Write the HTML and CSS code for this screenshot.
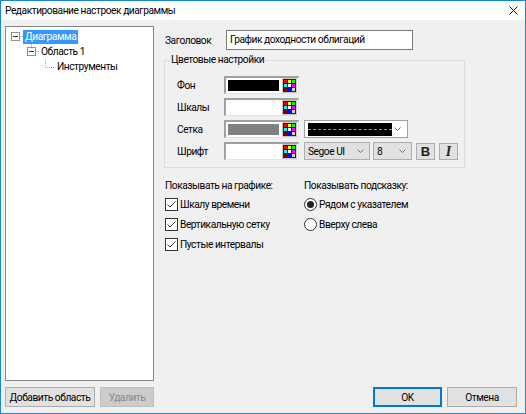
FILE: index.html
```html
<!DOCTYPE html>
<html lang="ru">
<head>
<meta charset="utf-8">
<title>Редактирование настроек диаграммы</title>
<link rel="stylesheet" href="styles.css">
</head>
<body>
<div class="window">
  <div class="titlebar">
    <span class="title">Редактирование настроек диаграммы</span>
    <svg class="close" width="9" height="9" viewBox="0 0 9 9"><path d="M0.5 0.5L8.5 8.5M8.5 0.5L0.5 8.5" stroke="#111" stroke-width="1"/></svg>
  </div>
  <div class="content">
    <div class="left">
      <div class="tree">
        <div class="node lvl0">
          <svg class="twist" width="15" height="15" viewBox="0 0 15 15">
            <rect x="3.5" y="3.5" width="8" height="8" fill="#fff" stroke="#919191"/>
            <path d="M5 7.5H10" stroke="#333"/>
            <path d="M12 7.5H15" stroke="#a0a0a0" stroke-dasharray="1 1"/>
          </svg>
          <span class="label selected">Диаграмма</span>
        </div>
        <div class="node lvl1">
          <svg class="twist" width="15" height="15" viewBox="0 0 15 15">
            <path d="M7.5 0V3" stroke="#a0a0a0" stroke-dasharray="1 1"/>
            <rect x="3.5" y="3.5" width="8" height="8" fill="#fff" stroke="#919191"/>
            <path d="M5 7.5H10" stroke="#333"/>
            <path d="M12 7.5H15" stroke="#a0a0a0" stroke-dasharray="1 1"/>
          </svg>
          <span class="label">Область 1</span>
        </div>
        <div class="node lvl2">
          <svg class="twist" width="15" height="15" viewBox="0 0 15 15">
            <path d="M5.5 0V8.5H14" fill="none" stroke="#a0a0a0" stroke-dasharray="1 1"/>
          </svg>
          <span class="label">Инструменты</span>
        </div>
      </div>
      <div class="left-buttons">
        <button class="btn btn-add">Добавить область</button>
        <button class="btn btn-del" disabled>Удалить</button>
      </div>
    </div>

    <div class="right">
      <div class="caption-row">
        <span class="caption-label">Заголовок</span>
        <div class="textbox">График доходности облигаций</div>
      </div>

      <fieldset class="group">
        <legend>Цветовые настройки</legend>
        <div class="crow">
          <span class="clabel">Фон</span>
          <div class="colorbox">
            <span class="swatch swatch-black"></span>
            <span class="palette"><i class="p1"></i><i class="p2"></i><i class="p3"></i><i class="p4"></i><i class="p5"></i><i class="p6"></i><i class="p7"></i><i class="p8"></i><i class="p9"></i></span>
          </div>
        </div>
        <div class="crow">
          <span class="clabel">Шкалы</span>
          <div class="colorbox">
            <span class="swatch swatch-white"></span>
            <span class="palette"><i class="p1"></i><i class="p2"></i><i class="p3"></i><i class="p4"></i><i class="p5"></i><i class="p6"></i><i class="p7"></i><i class="p8"></i><i class="p9"></i></span>
          </div>
        </div>
        <div class="crow">
          <span class="clabel">Сетка</span>
          <div class="colorbox">
            <span class="swatch swatch-gray"></span>
            <span class="palette"><i class="p1"></i><i class="p2"></i><i class="p3"></i><i class="p4"></i><i class="p5"></i><i class="p6"></i><i class="p7"></i><i class="p8"></i><i class="p9"></i></span>
          </div>
          <div class="combo combo-line">
            <span class="linestyle"><span class="dash"></span></span>
            <svg class="chev" width="7" height="4" viewBox="0 0 7 4"><path d="M0.5 0.5L3.5 3.5L6.5 0.5" fill="none" stroke="#707070"/></svg>
          </div>
        </div>
        <div class="crow">
          <span class="clabel">Шрифт</span>
          <div class="colorbox">
            <span class="swatch swatch-white"></span>
            <span class="palette"><i class="p1"></i><i class="p2"></i><i class="p3"></i><i class="p4"></i><i class="p5"></i><i class="p6"></i><i class="p7"></i><i class="p8"></i><i class="p9"></i></span>
          </div>
          <div class="combo combo-font">
            <span class="combo-text">Segoe UI</span>
            <svg class="chev" width="7" height="4" viewBox="0 0 7 4"><path d="M0.5 0.5L3.5 3.5L6.5 0.5" fill="none" stroke="#707070"/></svg>
          </div>
          <div class="combo combo-size">
            <span class="combo-text">8</span>
            <svg class="chev" width="7" height="4" viewBox="0 0 7 4"><path d="M0.5 0.5L3.5 3.5L6.5 0.5" fill="none" stroke="#707070"/></svg>
          </div>
          <button class="tbtn tbtn-b">B</button>
          <button class="tbtn tbtn-i">I</button>
        </div>
      </fieldset>

      <div class="options">
        <div class="opt-col">
          <div class="opt-head">Показывать на графике:</div>
          <div class="opt">
            <svg class="check" width="13" height="13" viewBox="0 0 13 13"><rect x="0.5" y="0.5" width="12" height="12" fill="#fff" stroke="#333"/><path d="M2.5 6.5L5 9L10.5 3.5" fill="none" stroke="#3a3a3a" stroke-width="1"/></svg>
            <span>Шкалу времени</span>
          </div>
          <div class="opt">
            <svg class="check" width="13" height="13" viewBox="0 0 13 13"><rect x="0.5" y="0.5" width="12" height="12" fill="#fff" stroke="#333"/><path d="M2.5 6.5L5 9L10.5 3.5" fill="none" stroke="#3a3a3a" stroke-width="1"/></svg>
            <span>Вертикальную сетку</span>
          </div>
          <div class="opt">
            <svg class="check" width="13" height="13" viewBox="0 0 13 13"><rect x="0.5" y="0.5" width="12" height="12" fill="#fff" stroke="#333"/><path d="M2.5 6.5L5 9L10.5 3.5" fill="none" stroke="#3a3a3a" stroke-width="1"/></svg>
            <span>Пустые интервалы</span>
          </div>
        </div>
        <div class="opt-col">
          <div class="opt-head">Показывать подсказку:</div>
          <div class="opt">
            <svg class="radio" width="13" height="13" viewBox="0 0 13 13"><circle cx="6.5" cy="6.5" r="6" fill="#fff" stroke="#333"/><circle cx="6.5" cy="6.5" r="3.5" fill="#222"/></svg>
            <span>Рядом с указателем</span>
          </div>
          <div class="opt">
            <svg class="radio" width="13" height="13" viewBox="0 0 13 13"><circle cx="6.5" cy="6.5" r="6" fill="#fff" stroke="#333"/></svg>
            <span>Вверху слева</span>
          </div>
        </div>
      </div>

      <div class="dialog-buttons">
        <button class="btn btn-ok">OK</button>
        <button class="btn btn-cancel">Отмена</button>
      </div>
    </div>
  </div>
</div>
</body>
</html>
```

FILE: styles.css
```css
html, body {
  margin: 0;
  padding: 0;
}
body {
  width: 526px;
  height: 414px;
  overflow: hidden;
  background: #f0f0f0;
  font-family: Roboto, "Noto Sans", sans-serif;
  font-size: 10.2px;
  letter-spacing: -0.45px;
  color: #000;
}
.window {
  box-sizing: border-box;
  width: 526px;
  height: 414px;
  border: 1px solid #1c86d6;
  background: #f0f0f0;
  display: flex;
  flex-direction: column;
}
.titlebar {
  height: 19px;
  flex: none;
  background: #fff;
  display: flex;
  align-items: center;
  justify-content: space-between;
  padding: 0 7px 0 4px;
}
.title {
  line-height: 19px;
}
.close {
  display: block;
}
.content {
  flex: 1;
  display: flex;
  gap: 10px;
  padding: 6px 8px 6px 4px;
  min-height: 0;
}
.left {
  width: 149px;
  flex: none;
  display: flex;
  flex-direction: column;
}
.tree {
  flex: 1;
  box-sizing: border-box;
  background: #fff;
  border: 1px solid #828790;
  padding: 2px 0 0 2px;
}
.node {
  display: flex;
  align-items: center;
  height: 15px;
}
.lvl1 { padding-left: 16px; }
.lvl2 { padding-left: 32px; }
.twist {
  display: block;
  flex: none;
}
.label {
  padding: 0 2px;
  line-height: 14px;
  white-space: nowrap;
}
.label.selected {
  background: #3399ff;
  color: #fff;
}
.left-buttons {
  display: flex;
  gap: 5px;
  margin-top: 6px;
}
.btn {
  box-sizing: border-box;
  height: 20px;
  padding: 0;
  margin: 0;
  font-family: inherit;
  font-size: inherit;
  letter-spacing: inherit;
  color: #000;
  background: #e1e1e1;
  border: 1px solid #adadad;
  white-space: nowrap;
}
.btn-add { width: 90px; }
.btn-del {
  width: 54px;
  background: #cccccc;
  border-color: #bfbfbf;
  color: #8a8a8a;
}
.btn-ok {
  width: 69px;
  border-color: #0078d7;
  box-shadow: inset 0 0 0 1px #0078d7;
}
.btn-cancel { width: 70px; }

.right {
  flex: 1;
  display: flex;
  flex-direction: column;
}
.caption-row {
  display: flex;
  align-items: center;
  margin-top: 4px;
  height: 20px;
}
.caption-label {
  width: 61px;
  padding-left: 1px;
}
.textbox {
  box-sizing: border-box;
  width: 187px;
  height: 20px;
  line-height: 18px;
  padding-left: 3px;
  background: #fff;
  border: 1px solid #7a7a7a;
  white-space: nowrap;
}
.group {
  align-self: flex-start;
  box-sizing: border-box;
  width: 301px;
  margin: 3px 0 0 0;
  padding: 9px 0 7px 12px;
  border: 1px solid #dcdcdc;
}
.group legend {
  margin-left: -7px;
  padding: 0 1px;
  line-height: 14px;
}
.crow {
  display: flex;
  align-items: center;
  gap: 5px;
  height: 18px;
}
.crow + .crow { margin-top: 4px; }
.clabel {
  width: 42px;
}
.colorbox {
  box-sizing: border-box;
  width: 75px;
  height: 18px;
  display: flex;
  align-items: center;
  gap: 3px;
  padding: 0 1px 0 2px;
  background: #fff;
  border-style: solid;
  border-width: 2px 1px 1px 2px;
  border-color: #a0a0a0 #e3e3e3 #e3e3e3 #a0a0a0;
}
.swatch {
  flex: 1;
  height: 11px;
  box-sizing: border-box;
}
.swatch-black { background: #000; }
.swatch-white { background: #fff; }
.swatch-gray { background: #808080; }
.palette {
  flex: none;
  display: grid;
  grid-template-columns: repeat(3, 3px);
  grid-template-rows: repeat(3, 3px);
  gap: 1px;
  padding: 1px;
  background: #202020;
  border: 1px solid #c8c8c8;
}
.palette i { display: block; }
.p1 { background: #ff0000; }
.p2 { background: #ffff00; }
.p3 { background: #00ff00; }
.p4 { background: #00ffff; }
.p5 { background: #ffffff; }
.p6 { background: #ff00ff; }
.p7 { background: #800000; }
.p8 { background: #0000ff; }
.p9 { background: #d4d0c8; }

.combo {
  box-sizing: border-box;
  height: 18px;
  display: flex;
  align-items: center;
  justify-content: space-between;
  border: 1px solid #adadad;
  background: #e1e1e1;
  padding: 0 5px 0 3px;
}
.combo-line {
  width: 104px;
  background: #fff;
  border-color: #a0a0a0;
  padding: 0 6px 0 3px;
}
.linestyle {
  width: 84px;
  height: 13px;
  background: #000;
  display: flex;
  align-items: center;
}
.dash {
  display: block;
  width: 100%;
  height: 0;
  border-top: 1px dashed #9a9a9a;
}
.combo-font {
  width: 66px;
}
.combo-size {
  width: 39px;
  margin-left: -2px;
}
.combo-text {
  white-space: nowrap;
}
.chev { display: block; flex: none; }
.tbtn {
  box-sizing: border-box;
  width: 19px;
  height: 17px;
  padding: 0;
  margin: 0;
  background: #e1e1e1;
  border: 1px solid #adadad;
  color: #222;
  line-height: 15px;
  letter-spacing: 0;
}
.tbtn-b {
  margin-left: -1px;
  font-family: "Liberation Sans", sans-serif;
  font-weight: bold;
  font-size: 13px;
}
.tbtn-i {
  margin-left: -1px;
  font-family: "Liberation Serif", serif;
  font-weight: bold;
  font-style: italic;
  font-size: 14px;
}

.options {
  display: grid;
  grid-template-columns: 139px 1fr;
  margin-top: 10px;
  padding-left: 1px;
}
.opt-head {
  line-height: 15px;
  height: 16px;
}
.opt {
  display: flex;
  align-items: center;
  gap: 2px;
  height: 20px;
}
.check, .radio { display: block; flex: none; }

.dialog-buttons {
  margin-top: auto;
  display: flex;
  justify-content: flex-end;
  gap: 5px;
}
```
